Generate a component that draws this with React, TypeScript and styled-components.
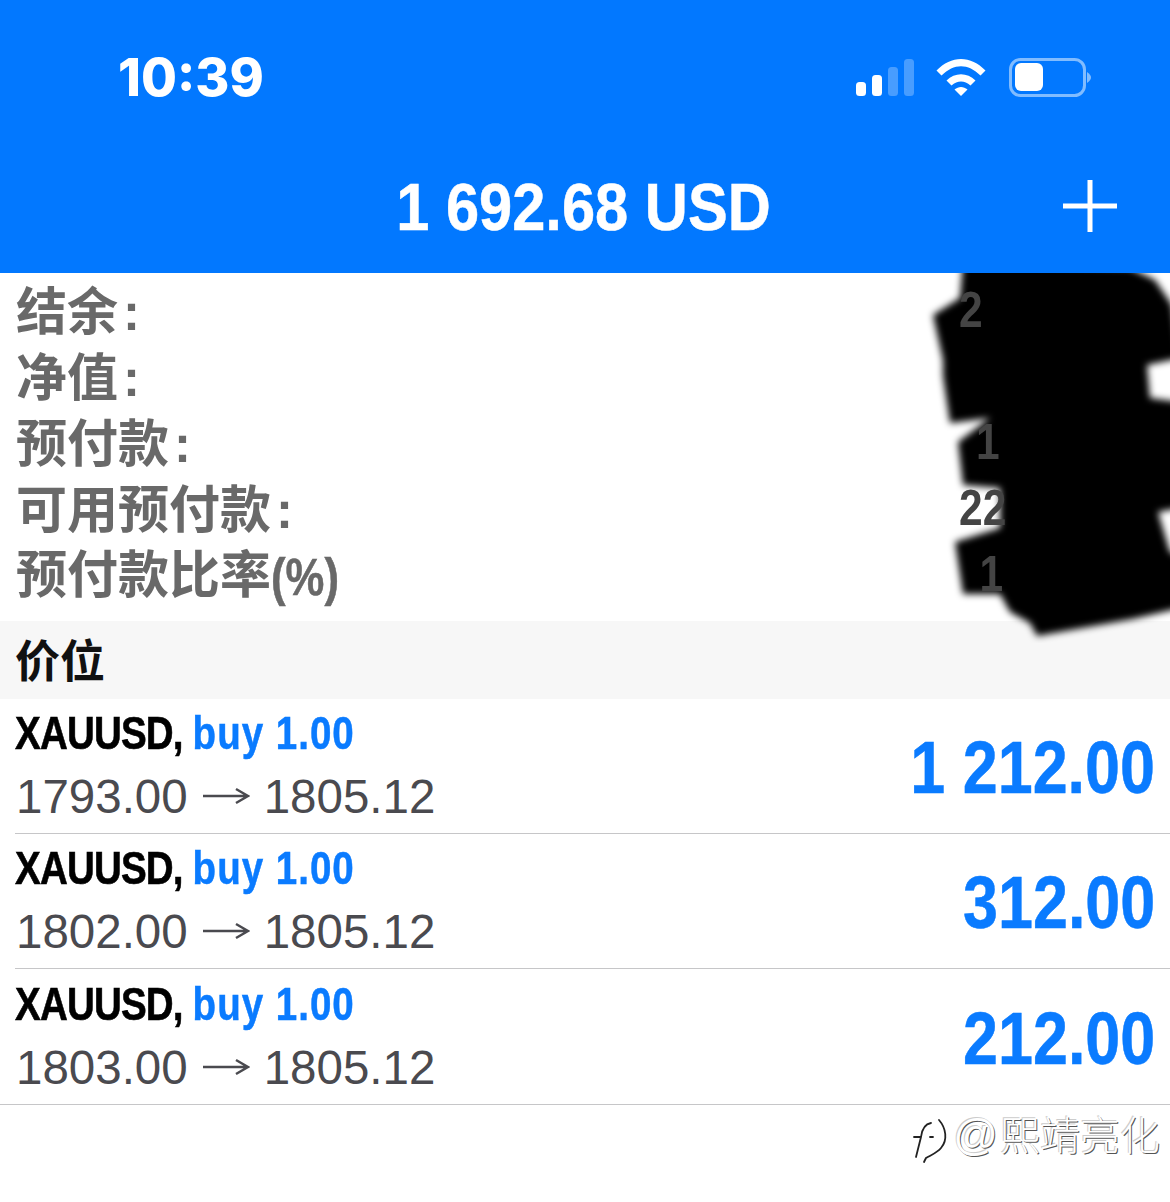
import React from "react";
import styled, { createGlobalStyle } from "styled-components";

const Global = createGlobalStyle`
  html, body { margin: 0; padding: 0; background: #fff; }
  #root { width: 1170px; height: 1202px; overflow: hidden; }
`;

const SANS = `"Liberation Sans", "Noto Sans CJK SC", sans-serif`;
const BLUE = "#0a7bff";

const Page = styled.div`
  width: 1170px;
  height: 1202px;
  background: #fff;
  font-family: ${SANS};
  display: flex;
  flex-direction: column;
`;
const Header = styled.header`
  height: 273px;
  background: #0278ff;
  color: #fff;
  display: flex;
  flex-direction: column;
  flex: none;
`;
const StatusBar = styled.div`
  height: 155px;
  padding: 0 78px 0 118px;
  display: flex;
  align-items: center;
  justify-content: space-between;
`;
const Clock = styled.div`
  font-family: Inter, ${SANS};
  font-weight: 800;
  font-size: 52px;
  line-height: 1;
`;
const StatusIcons = styled.svg`
  display: block;
`;
const NavBar = styled.div`
  flex: 1;
  display: grid;
  grid-template-columns: 1fr auto 1fr;
  align-items: center;
  padding: 0 53px 16px 49px;
`;
const Balance = styled.div`
  grid-column: 2;
  font-weight: 700;
  font-size: 67px;
  line-height: 1;
  transform: scaleX(0.89);
  -webkit-text-stroke: 0.5px #fff;
`;
const PlusIcon = styled.svg`
  justify-self: end;
  display: block;
`;
const Summary = styled.section`
  position: relative;
  height: 348px;
  padding: 6px 16px 0;
  box-sizing: border-box;
  flex: none;
`;
const SummaryRow = styled.div`
  height: 66px;
  display: flex;
  align-items: center;
  justify-content: space-between;
  font-weight: 700;
  font-size: 51px;
  color: #696969;
  font-family: "Noto Sans CJK SC", ${SANS};
`;
const SummaryLabel = styled.span`
  line-height: 1;
  margin-top: -3px;
`;
const Colon = styled.span`
  font-family: ${SANS};
  margin-left: 5px;
`;
const Paren = styled.span`
  font-family: ${SANS};
  font-size: 52px;
  display: inline-block;
  vertical-align: -2px;
  transform: scaleX(0.84);
  transform-origin: left center;
  -webkit-text-stroke: 0.5px #696969;
`;
const SummaryValue = styled.span<{ $pad: number }>`
  position: relative;
  z-index: 3;
  font-family: ${SANS};
  font-weight: 700;
  font-size: 50px;
  line-height: 1;
  color: #444;
  width: 195px;
  margin-top: -4px;
  padding-left: ${(p) => p.$pad}px;
  box-sizing: border-box;
  transform: scaleX(0.85);
  transform-origin: left center;
`;
const Scribble = styled.svg`
  position: absolute;
  left: 900px;
  top: 0;
  z-index: 2;
`;
const SectionBar = styled.div`
  height: 78px;
  background: #f7f7f7;
  display: flex;
  align-items: center;
  padding: 0 0 3px 15px;
  box-sizing: border-box;
  font-family: "Noto Sans CJK SC", ${SANS};
  font-weight: 700;
  font-size: 45px;
  color: #111;
  flex: none;
`;
const Position = styled.div<{ $last?: boolean }>`
  height: ${(p) => (p.$last ? 136 : 135)}px;
  box-sizing: border-box;
  margin-left: ${(p) => (p.$last ? 0 : 15)}px;
  padding: 8px 15px 0 ${(p) => (p.$last ? 15 : 0)}px;
  border-bottom: 1px solid #c6c6c8;
  display: flex;
  align-items: center;
  justify-content: space-between;
  flex: none;
`;
const PositionText = styled.div`
  display: flex;
  flex-direction: column;
  margin-top: -8px;
`;
const Title = styled.div`
  font-weight: 700;
  font-size: 47px;
  line-height: 62px;
  color: #000;
  transform: scaleX(0.82);
  transform-origin: left center;
  margin-top: -2px;
  margin-bottom: 2px;
  white-space: nowrap;
  letter-spacing: -1px;
  -webkit-text-stroke: 0.6px #000;
`;
const Side = styled.span`
  color: ${BLUE};
  letter-spacing: 1.2px;
  -webkit-text-stroke: 0.5px ${BLUE};
`;
const Prices = styled.div`
  font-size: 47.5px;
  line-height: 62px;
  color: #4a4a4f;
  display: flex;
  align-items: center;
  gap: 14px;
  padding-left: 1px;
`;
const Arrow = styled.svg`
  display: block;
  margin-top: -2px;
`;
const Profit = styled.div`
  font-weight: 700;
  font-size: 74px;
  line-height: 1;
  color: ${BLUE};
  margin-top: -4px;
  transform: scaleX(0.85);
  transform-origin: right center;
  -webkit-text-stroke: 0.5px ${BLUE};
`;
const Footer = styled.div`
  flex: 1;
  display: flex;
  justify-content: flex-end;
  align-items: flex-start;
  gap: 4px;
  padding: 3px 10px 0 0;
`;
const WatermarkMark = styled.svg`
  display: block;
  margin-top: 6px;
`;
const WatermarkText = styled.div`
  font-family: "Noto Sans CJK SC", ${SANS};
  font-weight: 300;
  font-size: 40px;
  line-height: 50px;
  color: #fff;
  text-shadow: 1px 1px 0 #555, -1px -1px 0 #ccc;
`;
const WatermarkAt = styled.span`
  font-family: ${SANS};
  font-size: 44px;
  margin-right: 2px;
`;

const summary: [React.ReactNode, string, number][] = [
  [<React.Fragment key="a">结余<Colon>:</Colon></React.Fragment>, "2", 0],
  [<React.Fragment key="b">净值<Colon>:</Colon></React.Fragment>, "", 0],
  [<React.Fragment key="c">预付款<Colon>:</Colon></React.Fragment>, "1", 20],
  [<React.Fragment key="d">可用预付款<Colon>:</Colon></React.Fragment>, "22", 0],
  [<React.Fragment key="e">预付款比率<Paren>(%)</Paren></React.Fragment>, "1", 24],
];
const positions = [
  { open: "1793.00", profit: "1 212.00" },
  { open: "1802.00", profit: "312.00" },
  { open: "1803.00", profit: "212.00" },
];

export default function App() {
  return (
    <Page>
      <Global />
      <Header>
        <StatusBar>
          <Clock>10:39</Clock>
          <StatusIcons width="236" height="44" viewBox="856 56 236 44">
            <g fill="#fff">
              <rect x="856" y="82" width="10" height="14" rx="3.5" />
              <rect x="872" y="75" width="10" height="21" rx="3.5" />
              <rect x="888" y="67" width="10" height="29" rx="3.5" opacity=".28" />
              <rect x="904" y="59" width="10" height="37" rx="3.5" opacity=".28" />
              <path d="M936.5 70.5 C951 55 971 55 985.5 70.5 L980.5 75.5 C968 63 954 63 941.5 75.5 Z" />
              <path d="M946.5 80.5 C955 72 967 72 975.5 80.5 L970.5 85.5 C964.500 80 957.500 80 951.500 85.500 Z" />
              <path d="M954.500 89.500 C958.500 86 963.500 86 967.500 89.500 L961 96 Z" />
              <rect x="1015" y="63" width="28" height="28" rx="6" />
              <path d="M1087 72 C1090 74 1091 76 1091 77.500 C1091 79 1090 81 1087 83 Z" opacity=".5" />
            </g>
            <rect x="1010.500" y="59.500" width="74" height="36" rx="10" fill="none" stroke="#fff" strokeOpacity=".5" strokeWidth="3" />
          </StatusIcons>
        </StatusBar>
        <NavBar>
          <Balance>1 692.68 USD</Balance>
          <PlusIcon width="54" height="52" viewBox="0 0 54 52">
            <path d="M27 0V52M0 26H54" stroke="#fff" strokeWidth="5" />
          </PlusIcon>
        </NavBar>
      </Header>
      <Summary>
        {summary.map(([label, value, pad], i) => (
          <SummaryRow key={i}>
            <SummaryLabel>{label}</SummaryLabel>
            <SummaryValue $pad={pad}>{value}</SummaryValue>
          </SummaryRow>
        ))}
        <Scribble width="270" height="370" viewBox="900 273 270 370">
          <defs>
            <filter id="soft" x="-10%" y="-10%" width="120%" height="120%">
              <feGaussianBlur stdDeviation="3.5" />
            </filter>
          </defs>
          <path
            filter="url(#soft)"
            fill="#000"
            d="M963 262 L1130 268 L1155 280 L1172 305 L1180 358 L1147 365 L1150 398 L1180 402 L1180 508 L1158 512 L1170 552 L1180 556 L1180 608 L1133 619 L1037 636 L1030 623 L1010 612 L1000 594 L963 594 L955 542 L1000 528 L1000 488 L963 485 L958 442 L990 418 L950 423 L943 376 L943 360 L933 315 L960 298 Z"
          />
        </Scribble>
      </Summary>
      <SectionBar>价位</SectionBar>
      {positions.map((p, i) => (
        <Position key={i} $last={i === positions.length - 1}>
          <PositionText>
            <Title>
              XAUUSD, <Side>buy 1.00</Side>
            </Title>
            <Prices>
              {p.open}
              <Arrow width="48" height="18" viewBox="0 0 48 18">
                <path d="M1 9H46M34 2L46 9L34 16" fill="none" stroke="#4a4a4f" strokeWidth="2.500" />
              </Arrow>
              1805.12
            </Prices>
          </PositionText>
          <Profit>{p.profit}</Profit>
        </Position>
      ))}
      <Footer>
        <WatermarkMark width="36" height="50" viewBox="0 0 36 50">
          <path d="M3 43 L8 23 C9 15 12 10 18 9 M1 23 H8 M17 23 H20 M26 6 C33 14 35 26 28 34 C24 39 18 41 13 44 L11 48" fill="none" stroke="#222" strokeWidth="1.800" strokeLinecap="round" />
        </WatermarkMark>
        <WatermarkText>
          <WatermarkAt>@</WatermarkAt>熙靖亮化
        </WatermarkText>
      </Footer>
    </Page>
  );
}
